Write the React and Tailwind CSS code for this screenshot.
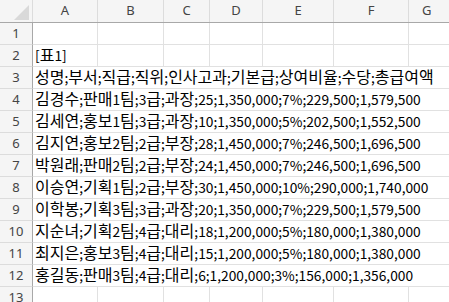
import React from "react";

const cols = [
  { l: "A", w: "w-[65px]" },
  { l: "B", w: "w-[66px]" },
  { l: "C", w: "w-[46px]" },
  { l: "D", w: "w-[53px]" },
  { l: "E", w: "w-[71px]" },
  { l: "F", w: "w-[75px]" },
];

const lines = [
  "성명;부서;직급;직위;인사고과;기본급;상여비율;수당;총급여액",
  "김경수;판매1팀;3급;과장;25;1,350,000;7%;229,500;1,579,500",
  "김세연;홍보1팀;3급;과장;10;1,350,000;5%;202,500;1,552,500",
  "김지연;홍보2팀;2급;부장;28;1,450,000;7%;246,500;1,696,500",
  "박원래;판매2팀;2급;부장;24;1,450,000;7%;246,500;1,696,500",
  "이승연;기획1팀;2급;부장;30;1,450,000;10%;290,000;1,740,000",
  "이학봉;기획3팀;3급;과장;20;1,350,000;7%;229,500;1,579,500",
  "지순녀;기획2팀;4급;대리;18;1,200,000;5%;180,000;1,380,000",
  "최지은;홍보3팀;4급;대리;15;1,200,000;5%;180,000;1,380,000",
  "홍길동;판매3팀;4급;대리;6;1,200,000;3%;156,000;1,356,000",
];

function Txt({ t }) {
  const parts = t.split(/([가-힣]+)/);
  return (
    <span className="leading-none pb-[2px] whitespace-nowrap">
      {parts.map((p, i) =>
        i % 2 === 1 ? (
          <span key={i} className="text-[16px]">{p}</span>
        ) : (
          <span key={i} className="text-[13.75px]">{p}</span>
        )
      )}
    </span>
  );
}

function RowHead({ n }) {
  return (
    <div className="w-[33px] shrink-0 h-full flex items-center justify-center bg-[#f5f5f5] border-r border-[#a8a8a8] border-b border-b-[#dcdcdc] text-[13px] text-[#444] font-['Noto_Sans','Liberation_Sans',sans-serif]">
      {n}
    </div>
  );
}

function EmptyCells({ children }) {
  return (
    <>
      {cols.map((c, i) => (
        <div
          key={c.l}
          className={`${c.w} shrink-0 h-full border-r border-b border-[#e1e1e1] flex items-center pl-[2px] whitespace-nowrap overflow-visible`}
        >
          {i === 0 ? children : null}
        </div>
      ))}
      <div className="flex-1 h-full border-b border-[#e1e1e1]" />
    </>
  );
}

export default function App() {
  return (
    <div className="w-[449px] h-[302px] overflow-hidden bg-white text-[#000] font-['Noto_Sans_CJK_KR',sans-serif]">
      <div className="flex h-[23px] bg-[#f5f5f5] border-b border-[#a8a8a8]">
        <div className="w-[33px] shrink-0 h-full relative border-r border-[#dcdcdc]">
          <svg className="absolute left-[14px] top-[5px]" width="15" height="15" viewBox="0 0 15 15">
            <polygon points="15,0 15,15 0,15" fill="#d9d9d9" />
          </svg>
        </div>
        {cols.map((c) => (
          <div
            key={c.l}
            className={`${c.w} shrink-0 h-full flex items-center justify-center border-r border-[#dcdcdc] text-[13px] text-[#444] font-['Noto_Sans','Liberation_Sans',sans-serif]`}
          >
            {c.l}
          </div>
        ))}
        <div className="flex-1 h-full flex items-center pl-[13px] text-[13px] text-[#444] font-['Noto_Sans','Liberation_Sans',sans-serif]">
          G
        </div>
      </div>

      <div className="flex h-[22px]">
        <RowHead n={1} />
        <EmptyCells />
      </div>
      <div className="flex h-[22px]">
        <RowHead n={2} />
        <EmptyCells>
          <Txt t="[표1]" />
        </EmptyCells>
      </div>
      {lines.map((t, i) => (
        <div key={i} className="flex h-[22px]">
          <RowHead n={i + 3} />
          <div className="flex-1 h-full border-b border-[#e1e1e1] flex items-center pl-[2px] whitespace-nowrap">
            <Txt t={t} />
          </div>
        </div>
      ))}
      <div className="flex h-[22px]">
        <RowHead n={13} />
        <EmptyCells />
      </div>
    </div>
  );
}
